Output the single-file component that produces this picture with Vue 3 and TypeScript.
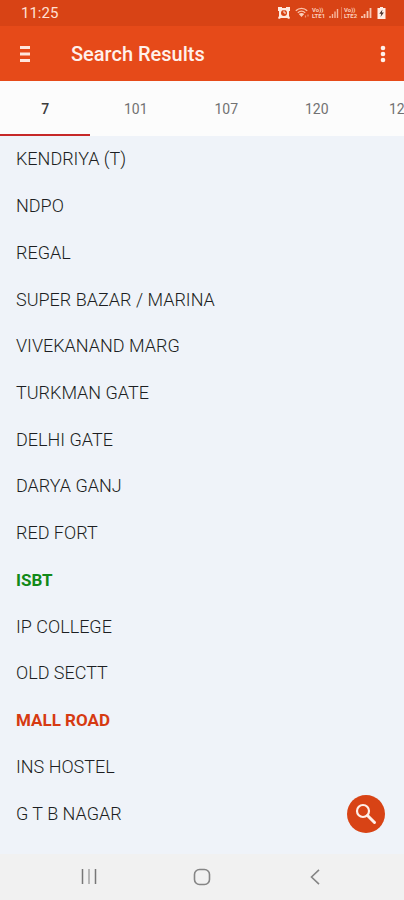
<script setup lang="ts">
import { ref } from 'vue'

interface Stop {
  name: string
  mark?: 'origin' | 'destination'
}

const routes: string[] = ['7', '101', '107', '120', '12']
const activeRoute = ref<string>('7')

const stops: Stop[] = [
  { name: 'KENDRIYA (T)' },
  { name: 'NDPO' },
  { name: 'REGAL' },
  { name: 'SUPER BAZAR / MARINA' },
  { name: 'VIVEKANAND MARG' },
  { name: 'TURKMAN GATE' },
  { name: 'DELHI GATE' },
  { name: 'DARYA GANJ' },
  { name: 'RED FORT' },
  { name: 'ISBT', mark: 'origin' },
  { name: 'IP COLLEGE' },
  { name: 'OLD SECTT' },
  { name: 'MALL ROAD', mark: 'destination' },
  { name: 'INS HOSTEL' },
  { name: 'G T B NAGAR' },
]
</script>

<template>
  <div class="screen">
    <div class="status">
      <span class="clock">11:25</span>
      <div class="indicators">
        <!-- alarm -->
        <svg width="12" height="12" viewBox="0 0 12 12">
          <path d="M0 0h4v1h4V0h4v4h-1v5l1 2-1 1-2-1H3l-2 1-1-1 1-2V4H0z" fill="#ffe9df" />
          <circle cx="6" cy="6" r="3" fill="#d84315" />
          <path d="M6 3.5V6h2" fill="none" stroke="#ffe9df" stroke-width="1" />
        </svg>
        <!-- wifi -->
        <svg class="wifi" width="15" height="12" viewBox="0 0 15 12">
          <g fill="none" stroke="#fbc3ab" stroke-width="1.4">
            <path d="M.8 3.8C4 .6 9 .6 12.2 3.8" />
            <path d="M2.8 5.8c2.2-2 5.2-2 7.4 0" />
          </g>
          <path d="M3.8 7q2.700-2 5.400 0L6.500 10z" fill="#fbd0bd" />
          <path d="M10.500 8.500v2M13 7.500v2" stroke="#ef9674" stroke-width="1.2" />
        </svg>
        <span class="volte"><span>Vo))</span><span>LTE1</span></span>
        <svg width="10" height="12" viewBox="0 0 10 12">
          <path d="M1 9v2M3.500 7v4M6 4.500V11M8.500 2v9" stroke="#f7b59b" stroke-width="1.4" />
        </svg>
        <span class="rule"></span>
        <span class="volte"><span>Vo))</span><span>LTE2</span></span>
        <svg width="11" height="12" viewBox="0 0 11 12">
          <path d="M1 9v2M3.500 7v4M6.500 4v7M9.500 1v10" stroke="#f9c5b0" stroke-width="1.8" />
        </svg>
        <!-- charging battery -->
        <svg class="battery" width="9" height="12" viewBox="0 0 8 12">
          <path d="M2.500 0h3v1H8v11H0V1h2.500z" fill="#ffeee6" />
          <path d="M5 2.500 1.800 6.800h2L3 10l3.400-4.500H4.300z" fill="#46302a" />
        </svg>
      </div>
    </div>

    <header class="appbar">
      <button class="icon-button" type="button" aria-label="Open menu">
        <svg width="10" height="16" viewBox="0 0 10 16">
          <path d="M0 1.500h10M0 8h10M0 14.500h10" stroke="#ffe6dc" stroke-width="3" />
        </svg>
      </button>
      <h1 class="title">Search Results</h1>
      <button class="icon-button more" type="button" aria-label="More options">
        <svg width="6" height="18" viewBox="0 0 6 18">
          <g fill="#fff0e9">
            <circle cx="3" cy="3" r="2.3" />
            <circle cx="3" cy="9" r="2.3" />
            <circle cx="3" cy="15" r="2.3" />
          </g>
        </svg>
      </button>
    </header>

    <nav class="tabs" role="tablist">
      <button
        v-for="route in routes"
        :key="route"
        class="tab"
        :class="{ active: route === activeRoute }"
        type="button"
        role="tab"
        :aria-selected="route === activeRoute"
        @click="activeRoute = route"
      >
        {{ route }}
      </button>
    </nav>

    <main class="content">
      <ul class="stops">
        <li v-for="stop in stops" :key="stop.name" class="stop" :class="stop.mark">{{ stop.name }}</li>
      </ul>
      <button class="fab" type="button" aria-label="Search">
        <svg width="22" height="22" viewBox="0 0 22 22" fill="none" stroke="#ffefe8">
          <circle cx="8" cy="8" r="6" stroke-width="2.2" />
          <path d="m12.500 12.500 7 7" stroke-width="3" stroke-linecap="round" />
        </svg>
      </button>
    </main>

    <footer class="navbar">
      <button class="nav-button" type="button" aria-label="Recent apps">
        <svg width="16" height="16" viewBox="0 0 16 16">
          <path d="M1.500 0v15M14.500 0v15" stroke="#777" stroke-width="1.5" />
          <path d="M8 0v15" stroke="#a3a3a3" stroke-width="1.5" />
        </svg>
      </button>
      <button class="nav-button" type="button" aria-label="Home">
        <svg width="18" height="18" viewBox="0 0 18 18">
          <rect x="1.500" y="1.500" width="15" height="15" rx="5" fill="none" stroke="#858585" stroke-width="1.6" />
        </svg>
      </button>
      <button class="nav-button" type="button" aria-label="Back">
        <svg width="16" height="16" viewBox="0 0 16 16">
          <path d="M12 .8 4.500 8l7.500 7.200" fill="none" stroke="#858585" stroke-width="1.6" />
        </svg>
      </button>
    </footer>
  </div>
</template>

<style>
body {
  margin: 0;
}
</style>

<style scoped>
.screen {
  display: flex;
  flex-direction: column;
  min-height: 100vh;
  overflow: hidden;
  background: #eff3f9;
  font-family: Roboto, 'Liberation Sans', sans-serif;
}

button {
  margin: 0;
  padding: 0;
  border: 0;
  background: none;
  font-family: inherit;
  cursor: pointer;
}

svg {
  display: block;
}

.status {
  display: flex;
  align-items: center;
  justify-content: space-between;
  height: 26px;
  padding: 0 18px 0 21px;
  background: #d84315;
}

.clock {
  color: #ffe0d4;
  font-size: 15px;
  line-height: 26px;
}

.indicators {
  display: flex;
  align-items: center;
  gap: 2px;
}

.wifi {
  margin-left: 3px;
}

.volte {
  display: flex;
  flex-direction: column;
  width: 15px;
  color: #fbd0bf;
  font-size: 6px;
  font-weight: 700;
  line-height: 6px;
}

.rule {
  width: 1px;
  height: 12px;
  background: #e57750;
}

.battery {
  margin-left: 3px;
}

.appbar {
  display: flex;
  align-items: center;
  height: 55px;
  padding: 0 9px 0 10px;
  background: #e64a19;
}

.icon-button {
  display: grid;
  place-items: center;
  width: 30px;
  height: 40px;
}

.more {
  margin-left: auto;
  width: 24px;
}

.title {
  margin: 0 0 0 31px;
  color: #fff1eb;
  font-size: 20px;
  font-weight: 500;
  line-height: 24px;
}

.tabs {
  display: flex;
  height: 55px;
  overflow: hidden;
  background: #fcfcfc;
}

.tab {
  flex: 0 0 22.4%;
  box-sizing: border-box;
  padding-top: 2px;
  border-bottom: 2px solid transparent;
  color: #727272;
  font-size: 14px;
  line-height: 20px;
}

.tab:last-child {
  flex: 1 0 auto;
  padding-left: 27px;
  text-align: left;
}

.tab.active {
  border-bottom-color: #c62828;
  color: #3c3c3c;
  font-weight: 500;
}

.content {
  display: flex;
  flex: 1;
  position: relative;
}

.stops {
  display: grid;
  flex: 1;
  grid-auto-rows: 1fr;
  margin: 0;
  padding: 0 16px 17px;
  list-style: none;
}

.stop {
  display: flex;
  align-items: center;
  color: #1c1e22;
  font-size: 18px;
  font-weight: 300;
  line-height: 24px;
}

.origin {
  color: #128a18;
  font-size: 17px;
  font-weight: 700;
}

.destination {
  color: #d63a12;
  font-size: 17px;
  font-weight: 700;
}

.fab {
  display: grid;
  place-items: center;
  position: absolute;
  right: 19px;
  bottom: 21px;
  width: 38px;
  height: 38px;
  border-radius: 50%;
  background: #d84315;
}

.navbar {
  display: flex;
  align-items: center;
  justify-content: space-between;
  height: 46px;
  padding: 0 18%;
  background: #f1f1f1;
}

.nav-button {
  display: grid;
  place-items: center;
  width: 32px;
  height: 40px;
}
</style>
